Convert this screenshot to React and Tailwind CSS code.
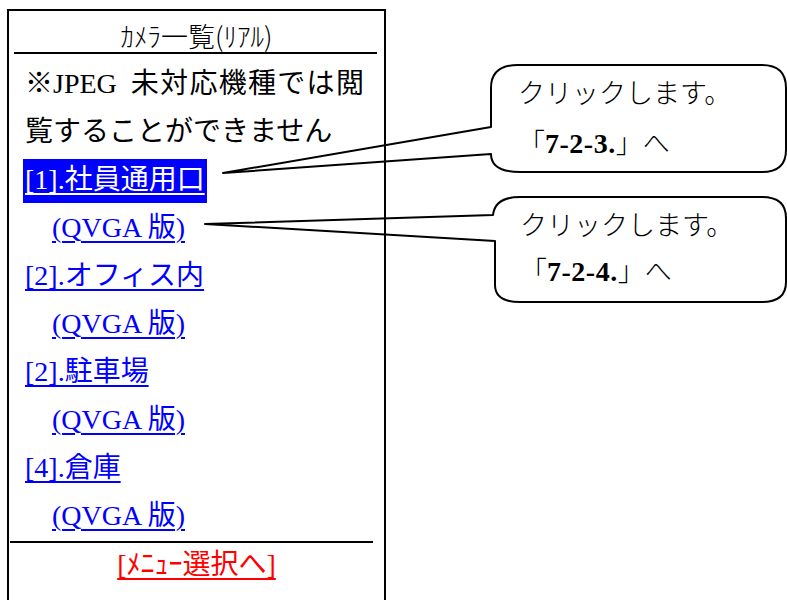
import React from "react";

const SERIF = "font-['Liberation_Serif','Noto_Sans_CJK_JP',serif]";

const cameras = [
  { label: "[1].社員通用口", active: true },
  { label: "[2].オフィス内" },
  { label: "[2].駐車場" },
  { label: "[4].倉庫" },
];

const Callout = ({ className, code }) => (
  <div className={`absolute text-[27px] text-black ${SERIF} ${className}`}>
    <div className="font-light">クリックします。</div>
    <div className="font-light">
      「<span className="font-bold tracking-[0.5px] text-[28px]">{code}</span>」へ
    </div>
  </div>
);

const App = () => {
  return (
    <div className="relative w-[787px] h-[600px] overflow-hidden bg-white">
      {/* phone screen */}
      <div className="ml-[7px] pt-[9px]">
        <div className="w-[379px] h-[620px] border-2 border-black">
          <div className="h-[41px] flex items-end justify-center pb-[1px]">
            <span className="text-[27px] leading-[30px] font-['Noto_Sans_CJK_JP',sans-serif] font-light">
              ｶﾒﾗ一覧(ﾘｱﾙ)
            </span>
          </div>
          <div className="ml-[5px] mr-[7px] h-[2px] bg-black" />

          <div className={`pt-[6px] pl-[16px] text-[28px] leading-[48px] ${SERIF}`}>
            <div className="text-black">
              ※JPEG{"\u00a0\u00a0"}
              <span className="tracking-[1.3px]">未対応機種では閲</span>
            </div>
            <div className="text-black">覧することができません</div>
            {cameras.map((cam) => (
              <React.Fragment key={cam.label}>
                <div>
                  <a
                    href="#"
                    className={
                      cam.active
                        ? "inline-block -ml-[2px] px-[2px] h-[44px] leading-[42px] bg-[#0000ff] text-white underline decoration-[2px] underline-offset-[4px]"
                        : "text-[#0000ff] underline decoration-[2px] underline-offset-[4px]"
                    }
                  >
                    {cam.label}
                  </a>
                </div>
                <div className="pl-[27px]">
                  <a href="#" className="text-[#0000ff] underline decoration-[2px] underline-offset-[4px]">
                    (QVGA 版)
                  </a>
                </div>
              </React.Fragment>
            ))}
          </div>

          <div className="mt-[1px] ml-[1px] mr-[11px] h-[2px] bg-black" />
          <div className={`mt-[2px] text-center text-[28px] leading-[40px] ${SERIF}`}>
            <a href="#" className="text-[#ff0000] underline decoration-[2px] underline-offset-[4px]">
              [ﾒﾆｭｰ選択へ]
            </a>
          </div>
        </div>
      </div>

      {/* annotation callouts */}
      <svg
        className="absolute inset-0 pointer-events-none"
        width="787"
        height="600"
        viewBox="0 0 787 600"
      >
        <path
          d="M 491 127 L 491 88 Q 491 65 518 65 L 762 65 Q 786 65 786 88 L 786 150 Q 786 172 762 172 L 520 172 Q 491 172 491 154 L 223 173 Z"
          fill="none"
          stroke="black"
          strokeWidth="2"
          strokeLinejoin="round"
        />
        <path
          d="M 493 215 Q 495 197 520 197 L 762 197 Q 786 197 786 218 L 786 282 Q 786 302 762 302 L 520 302 Q 495 302 495 285 L 495 241 L 205 224 Z"
          fill="none"
          stroke="black"
          strokeWidth="2"
          strokeLinejoin="round"
        />
      </svg>
      <Callout className="left-[518px] top-[69px] leading-[50px]" code="7-2-3." />
      <Callout className="left-[520px] top-[203px] leading-[46px]" code="7-2-4." />
    </div>
  );
};

export default App;
